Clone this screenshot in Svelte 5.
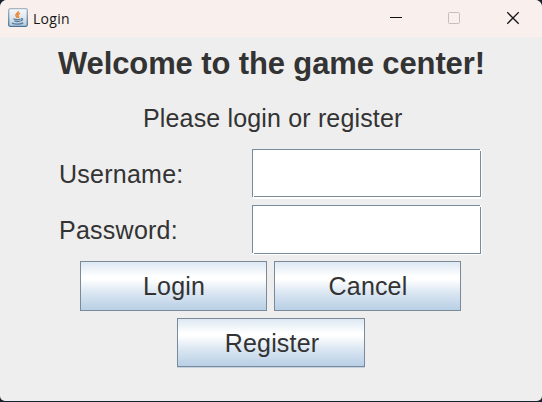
<script>
  const fields = [
    { id: 'username', label: 'Username:', type: 'text' },
    { id: 'password', label: 'Password:', type: 'password' }
  ];
  const actions = ['Login', 'Cancel', 'Register'];
</script>

<main class="desktop">
  <div class="window">
    <header class="titlebar">
      <svg class="java" width="20" height="20" viewBox="0 0 20 20" aria-hidden="true">
        <defs>
          <linearGradient id="tile" x1="0" y1="0" x2="0" y2="1">
            <stop offset="0" stop-color="#f8fafc" />
            <stop offset=".55" stop-color="#dce4ec" />
            <stop offset="1" stop-color="#b5c9db" />
          </linearGradient>
          <linearGradient id="edge" x1="0" y1="0" x2="0" y2="1">
            <stop offset="0" stop-color="#a5b5c2" />
            <stop offset="1" stop-color="#45749b" />
          </linearGradient>
        </defs>
        <rect x=".7" y=".7" width="18.6" height="17.6" rx="1.5" fill="url(#tile)" stroke="url(#edge)" stroke-width="1.3" />
        <path d="M10.3 3c.5 2-3 2.8-2.3 4.6.2.8 1 1.5 1.4 2.2M12 5.2c-2.5 1-2.6 2-1.7 3.1.5.7.3 1.2-.2 1.8" fill="none" stroke="#ea8b3b" stroke-width="1.6" />
        <path d="M5.5 10.9c1.8.8 5.4.7 7.2.1M6.3 12.9c1.6.6 4.6.6 6.1 0M13 10.6c2.4-.3 1.8 1.8-.2 2.3M4 14.9c2 1.5 9 1.5 11.2 0" fill="none" stroke="#557d9d" stroke-width="1.3" />
      </svg>
      <span class="caption">Login</span>
      <svg class="controls" width="138" height="37" viewBox="0 0 138 37" aria-hidden="true">
        <path d="M0 17.5h12" stroke="#111" />
        <rect x="58.5" y="12.5" width="11" height="11" rx="1" fill="none" stroke="#c5bebb" />
        <path d="M117.3 12.3l11.4 11.4M128.7 12.3l-11.4 11.4" stroke="#161616" stroke-width="1.25" />
      </svg>
    </header>
    <form class="content">
      <h1>Welcome to the game center!</h1>
      <p>Please login or register</p>
      {#each fields as field}
        <div class="row {field.id}">
          <label for={field.id}>{field.label}</label>
          <div class="field"><input id={field.id} type={field.type} /></div>
        </div>
      {/each}
      <div class="actions">
        {#each actions as action}
          <button type="button" class={action.toLowerCase()}><span>{action}</span></button>
        {/each}
      </div>
    </form>
  </div>
</main>

<style>
  :global(body) { margin: 0; overflow: hidden; }
  .desktop { width: 542px; height: 402px; background: #17222e; }
  .window {
    width: 542px; height: 401px; overflow: hidden;
    border-radius: 7px 7px 5px 5px; background: #eee;
    font-family: "Liberation Sans", Arial, sans-serif; color: #333;
  }
  .titlebar {
    display: flex; align-items: center; box-sizing: border-box;
    height: 37px; padding-left: 8px; background: #f9f0ee;
  }
  .java { flex: none; margin-top: -1px; }
  .caption {
    margin: 1px 0 0 5px; color: #171717; letter-spacing: .3px;
    font: 14px/20px "Open Sans", sans-serif;
  }
  .controls { flex: none; margin-left: auto; margin-right: 14px; }
  .content { display: flex; flex-direction: column; }
  h1 {
    margin: 9px 0 0 58px; height: 36px; white-space: nowrap;
    font-size: 31px; line-height: 36px; letter-spacing: -.12px;
  }
  p {
    margin: 21px 0 1px 143px; height: 30px;
    font-size: 25px; line-height: 30px; letter-spacing: .16px;
  }
  .row { display: flex; height: 50px; margin: 15px 0 0 59px; }
  .row.password { height: 50px; margin-top: 6px; }
  label { width: 193px; font-size: 25px; line-height: 50px; letter-spacing: .25px; }
  .field {
    box-sizing: border-box; width: 230px; height: 50px; padding: 0 1px 2px 0;
    background:
      linear-gradient(#eee, #eee) 0 100% / 1px 2px no-repeat,
      linear-gradient(#eee, #eee) 100% 0 / 1px 1px no-repeat,
      #fff;
  }
  .password .field { padding-bottom: 1px; }
  input {
    display: block; box-sizing: border-box; width: 229px; height: 48px;
    padding: 3px; border: 0; outline: 0; font: 25px "Liberation Sans", sans-serif;
    background:
      linear-gradient(#7a8a99, #7a8a99) 0 0 / 228px 1px no-repeat,
      linear-gradient(#7a8a99, #7a8a99) 0 0 / 1px 48px no-repeat,
      linear-gradient(#7a8a99, #7a8a99) 2px 100% / 227px 1px no-repeat,
      linear-gradient(#7a8a99, #7a8a99) 100% 2px / 1px 46px no-repeat,
      #fff;
  }
  .password input { height: 49px; background-size: 228px 1px, 1px 48px, 227px 1px, 1px 47px, auto; }
  .actions {
    display: flex; flex-wrap: wrap; justify-content: center; gap: 7px;
    margin-top: 6px; padding-right: 1px;
  }
  button {
    box-sizing: border-box; width: 187px; height: 50px; padding: 0 0 0 1px;
    border: 1px solid #7a8a99; border-radius: 0; color: #333;
    background: linear-gradient(#dde8f3 0, #fff 30%, #fff 36%, #dde8f3 62%, #b8cfe5 100%);
    font: 25px/48px "Liberation Sans", sans-serif; letter-spacing: .16px;
  }
  .register { width: 188px; height: 49px; padding: 2px 0 0 3px; line-height: 45px; box-shadow: 0 1px #c4d3e1; }
</style>
